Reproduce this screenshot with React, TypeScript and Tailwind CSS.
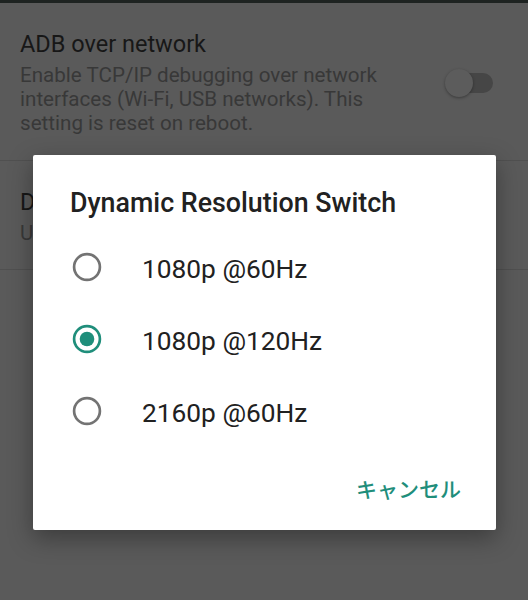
import React from 'react';

const options = ['1080p @60Hz', '1080p @120Hz', '2160p @60Hz'];

function Radio({ checked }: { checked: boolean }) {
  const color = checked ? '#1f8e7b' : '#737373';
  return (
    <svg width="30" height="30" viewBox="0 0 30 30">
      <circle cx="15" cy="15" r="12.9" fill="none" stroke={color} strokeWidth="2.7" />
      {checked && <circle cx="15" cy="15" r="7.3" fill={color} />}
    </svg>
  );
}

export default function App() {
  return (
    <div
      className="relative w-[528px] h-[600px] overflow-hidden bg-[#5a5a5a]"
      style={{ fontFamily: 'Roboto, "Noto Sans CJK JP", sans-serif' }}
    >
      <div className="h-[3px] bg-[#1e2321]" />

      {/* settings list (dimmed behind the dialog) */}
      <div className="flex items-center pl-5 pr-[35px] pt-[27px] pb-[25px] border-b border-[#505050]">
        <div className="flex-1">
          <div className="text-[23.5px] leading-[28px] text-[#171717]">ADB over network</div>
          <div className="mt-[5px] w-[400px] text-[20.6px] leading-[24px] text-[#383838]">
            Enable TCP/IP debugging over network interfaces (Wi-Fi, USB networks). This setting is reset on reboot.
          </div>
        </div>
        <div className="relative w-[48px] h-[30px] flex items-center">
          <div className="ml-[8px] w-[40px] h-[20px] rounded-full bg-[#464646]" />
          <div className="absolute left-0 top-[1px] w-[28px] h-[28px] rounded-full bg-[#5c5c5c] shadow-[0_1px_3px_rgba(0,0,0,0.35)]" />
        </div>
      </div>
      <div className="pl-5 pt-[27px] pb-[24px] border-b border-[#505050]">
        <div className="text-[23.5px] leading-[28px] text-[#171717]">D</div>
        <div className="mt-[5px] text-[20.6px] leading-[24px] text-[#383838]">U</div>
      </div>

      {/* dialog */}
      <div className="absolute left-[33px] top-[155px] w-[463px] h-[375px] rounded-[2px] bg-white shadow-[0_8px_24px_rgba(0,0,0,0.35)] flex flex-col">
        <div className="pl-[37px] pt-[32px] text-[26.8px] leading-[32px] font-medium text-[#212121]">
          Dynamic Resolution Switch
        </div>
        <div className="mt-[12px] flex flex-col">
          {options.map((o, i) => (
            <div key={o} className="h-[72px] flex items-center">
              <div className="ml-[39px] w-[30px] h-[30px]">
                <Radio checked={i === 1} />
              </div>
              <span className="ml-[40px] mt-[3px] text-[26.3px] leading-[32px] text-[#212121]">{o}</span>
            </div>
          ))}
        </div>
        <div className="flex justify-end pr-[35px] mt-[27px]">
          <span
            className="text-[21px] leading-[28px] font-medium text-[#1f8e7b]"
            style={{ fontFamily: '"Noto Sans CJK JP", sans-serif' }}
          >
            キャンセル
          </span>
        </div>
      </div>
    </div>
  );
}
